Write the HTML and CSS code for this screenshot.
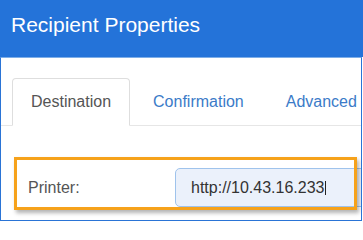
FILE: index.html
```html
<!DOCTYPE html>
<html lang="en">
<head>
<meta charset="utf-8">
<title>Recipient Properties</title>
<link rel="stylesheet" href="styles.css">
</head>
<body>
<div class="dialog">
  <div class="dialog-header">Recipient Properties</div>
  <div class="dialog-body">
    <ul class="tabs">
      <li class="tab active"><a>Destination</a></li>
      <li class="tab"><a>Confirmation</a></li>
      <li class="tab"><a>Advanced</a></li>
    </ul>
    <div class="form-row">
      <label class="form-label">Printer:</label>
      <div class="form-input" role="textbox">http://10.43.16.233<span class="caret"></span></div>
      <div class="highlight"></div>
    </div>
  </div>
</div>
</body>
</html>
```

FILE: styles.css
```css
html, body {
  margin: 0;
  padding: 0;
  background: #ffffff;
}

body {
  width: 363px;
  height: 222px;
  overflow: hidden;
  font-family: "Liberation Sans", Arial, sans-serif;
}

.dialog {
  width: 363px;
}

.dialog-header {
  box-sizing: border-box;
  height: 57px;
  padding: 13px 0 0 11px;
  background: #2473d9;
  color: #ffffff;
  font-size: 21px;
}

.dialog-body {
  box-sizing: border-box;
  width: 362px;
  height: 164px;
  border: 1px solid #2a74d6;
  border-top-color: #7eaee8;
  overflow: hidden;
  background: #ffffff;
}

.tabs {
  display: flex;
  margin: 20px 0 0 0;
  padding: 0 0 0 11px;
  list-style: none;
  border-bottom: 1px solid #e6e6e6;
}

.tab {
  margin: 0 4px -1px 0;
}

.tab a {
  display: block;
  padding: 0 18px;
  line-height: 46px;
  font-size: 16px;
  color: #3b7bc8;
  border: 1px solid transparent;
  border-radius: 4px 4px 0 0;
  white-space: nowrap;
}

.tab.active a {
  color: #555555;
  border-color: #dedede;
  border-bottom-color: #ffffff;
  background: #ffffff;
}

.form-row {
  position: relative;
  display: flex;
  align-items: center;
  margin-top: 42px;
}

.form-label {
  flex: 0 0 147px;
  padding-left: 27px;
  font-size: 16px;
  color: #555555;
}

.form-input {
  box-sizing: border-box;
  flex: 0 0 220px;
  height: 39px;
  padding-left: 15px;
  display: flex;
  align-items: center;
  font-size: 16px;
  color: #333333;
  background: #ebf1fb;
  border: 1px solid #9fc3ec;
  border-radius: 5px;
  white-space: nowrap;
}

.caret {
  display: inline-block;
  width: 1px;
  height: 14px;
  margin-left: 1px;
  background: #222222;
}

.highlight {
  position: absolute;
  box-sizing: border-box;
  left: 13px;
  top: -11px;
  width: 343px;
  height: 53px;
  border: 3px solid #f6a21b;
  box-shadow: 2px 3px 4px rgba(0, 0, 0, 0.3);
  pointer-events: none;
}
```
